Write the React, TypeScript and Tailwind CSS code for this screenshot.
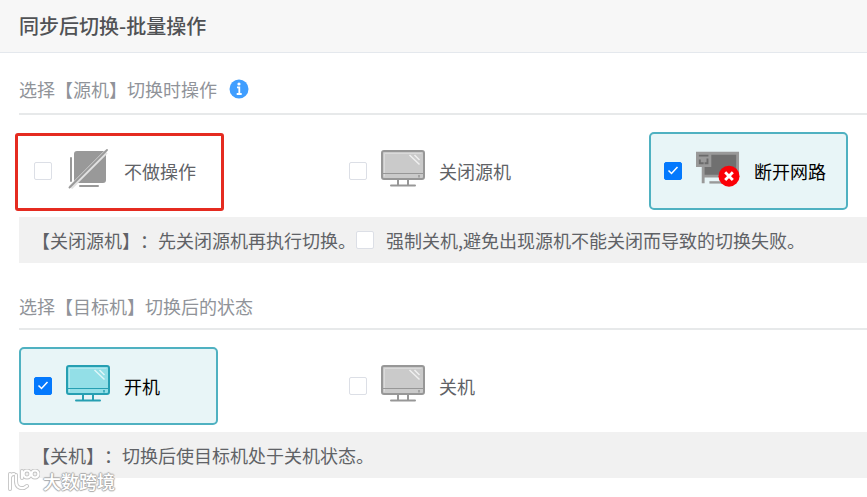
import React, { useState } from 'react';

type IconName = 'none' | 'monitor' | 'network';

interface Option {
  id: string;
  label: string;
  icon: IconName;
}

const sourceOptions: Option[] = [
  { id: 'source-none', label: '不做操作', icon: 'none' },
  { id: 'source-shutdown', label: '关闭源机', icon: 'monitor' },
  { id: 'source-disconnect', label: '断开网路', icon: 'network' },
];

const targetOptions: Option[] = [
  { id: 'target-on', label: '开机', icon: 'monitor' },
  { id: 'target-off', label: '关机', icon: 'monitor' },
];

function NoneIcon() {
  return (
    <svg width="44" height="40" viewBox="0 0 44 40" fill="none" aria-hidden="true">
      <rect x="8" y="2" width="32" height="32" rx="3" fill="#999" />
      <path d="M5 9v23M14 37h18" stroke="#999" strokeWidth="2" strokeLinecap="round" />
      <path d="M4.5 38.500L40 3" stroke="#e2e2e2" strokeWidth="4.5" />
      <path d="M3.5 38.500L41 1" stroke="#999" strokeWidth="1.8" strokeLinecap="round" />
    </svg>
  );
}

function MonitorIcon({ active }: { active: boolean }) {
  const line = active ? '#269fb2' : '#979797';
  const fill = active ? '#93dfe7' : '#cacaca';
  return (
    <svg width="44" height="40" viewBox="0 0 44 40" fill="none" aria-hidden="true">
      <rect x="1" y="2" width="42" height="28" rx="2" fill={fill} stroke={line} strokeWidth="2" />
      <path d="M3.5 27.5v-23h37" stroke="#fff" strokeOpacity="0.3" />
      <path d="M2 24.5h40" stroke={line} strokeWidth="1.2" />
      <path d="M38 26v2.5" stroke={line} strokeWidth="1.5" />
      <path d="M28.5 6l10 9.5M33.5 6l5 5" stroke="#fff" strokeOpacity="0.7" strokeWidth="1.5" />
      <path d="M17 31v5M27 31v5" stroke={line} strokeWidth="2" />
      <path d="M10 36.5h24" stroke={line} strokeWidth="2" strokeLinecap="round" />
    </svg>
  );
}

function NetworkIcon() {
  return (
    <svg width="46" height="40" viewBox="0 0 46 40" fill="none" aria-hidden="true">
      <path d="M0 2h45v27H9v6H6V18H0z" fill="#999" />
      <path d="M16 5h26v21H9v-8h7z" fill="#707070" />
      <path d="M3 6h10M4 10v4h4M12 9v5h-3" stroke="#6b6b6b" strokeWidth="2" />
      <path d="M14 34h15" stroke="#999" strokeWidth="2.5" />
      <circle cx="34.5" cy="27.5" r="11" fill="#fb0007" />
      <path d="M30.5 23.5l8 8M38.5 23.5l-8 8" stroke="#fff" strokeWidth="3" />
    </svg>
  );
}

function OptionIcon({ name, active }: { name: IconName; active: boolean }) {
  if (name === 'none') return <NoneIcon />;
  if (name === 'network') return <NetworkIcon />;
  return <MonitorIcon active={active} />;
}

interface CheckProps {
  id: string;
  checked: boolean;
  onChange: () => void;
}

function Check({ id, checked, onChange }: CheckProps) {
  return (
    <span className="relative block h-[18px] w-[18px] shrink-0">
      <input
        id={id}
        type="checkbox"
        checked={checked}
        onChange={onChange}
        className="block h-full w-full appearance-none rounded-xs border border-[#dcdfe6] bg-white checked:border-[#0479fd] checked:bg-[#0479fd]"
      />
      {checked && (
        <svg className="pointer-events-none absolute inset-0" width="18" height="18" viewBox="0 0 18 18" fill="none" aria-hidden="true">
          <path d="M4.5 8.5l3 3 6-6.5" stroke="#fff" strokeWidth="1.5" />
        </svg>
      )}
    </span>
  );
}

interface OptionRowProps {
  options: Option[];
  selected: string;
  marked?: string;
  onSelect: (id: string) => void;
}

function OptionRow({ options, selected, marked, onSelect }: OptionRowProps) {
  return (
    <div className="grid grid-cols-[repeat(3,199px)] justify-between pt-[17px] pr-[19px] pb-[7px]">
      {options.map((option) => {
        const active = option.id === selected;
        return (
          <div
            key={option.id}
            className={
              active
                ? 'relative flex h-[78px] items-center rounded-[5px] border-2 border-[#4fb1c1] bg-[#e8f5f7] px-[13px] text-black'
                : 'relative flex h-[78px] items-center rounded-[5px] border-2 border-transparent px-[13px] text-[#606266]'
            }
          >
            <Check id={option.id} checked={active} onChange={() => onSelect(option.id)} />
            <label htmlFor={option.id} className="flex items-center whitespace-nowrap">
              <span className="mx-[14px] flex w-[44px] -translate-y-0.5">
                <OptionIcon name={option.icon} active={active} />
              </span>
              {option.label}
            </label>
            {/* highlight frame around the marked option */}
            {option.id === marked && (
              <span className="pointer-events-none absolute -top-px -right-2 -bottom-[3px] -left-[6px] rounded-[3px] border-3 border-[#e52b20]" />
            )}
          </div>
        );
      })}
    </div>
  );
}

function Watermark() {
  const shape = (
    <>
      <path d="M2 5v15M2 8q1-3 4-3M8 6v6q0 8 8 7l3-2" />
      <path d="M14 2v7" />
      <circle cx="19" cy="5" r="3.5" />
      <circle cx="27" cy="5" r="3.5" />
    </>
  );
  return (
    <div className="absolute top-[469px] left-2 flex items-center gap-[3px] text-[18px] leading-[24px] text-white">
      <svg width="32" height="24" viewBox="0 0 32 24" fill="none" strokeLinecap="round" aria-hidden="true">
        <g stroke="#c4c4c4" strokeWidth="4">{shape}</g>
        <g stroke="#fff" strokeWidth="2.2">{shape}</g>
      </svg>
      <span className="font-medium [text-shadow:1px_0_1px_#aaa,-1px_0_1px_#aaa,0_1px_1px_#aaa,0_-1px_1px_#aaa]">
        大数跨境
      </span>
    </div>
  );
}

export default function App() {
  const [source, setSource] = useState('source-disconnect');
  const [target, setTarget] = useState('target-on');
  const [force, setForce] = useState(false);

  return (
    <div className="relative min-h-screen overflow-hidden bg-white font-['Noto_Sans_CJK_SC',sans-serif] text-[18px] leading-[24px] text-[#606266] [text-spacing-trim:space-all]">
      <header className="flex h-[53px] items-center border-b border-[#e4e8ed] bg-[#f7f7f7] pl-[19px]">
        <h1 className="text-[20px] font-medium text-[#505255]">同步后切换-批量操作</h1>
      </header>

      <main className="pl-[19px]">
        <section>
          <h2 className="flex h-[62px] items-center gap-3 border-b-2 border-[#e7e9ea] pt-[12px] text-[#909399]">
            选择【源机】切换时操作
            <svg width="20" height="20" viewBox="0 0 20 20" aria-hidden="true">
              <circle cx="10" cy="10" r="9.5" fill="#409eff" />
              <circle cx="10" cy="5" r="1.6" fill="#fff" />
              <path d="M8 8.3h2.3v6.5M7.700 15h5" fill="none" stroke="#fff" strokeWidth="1.8" />
            </svg>
          </h2>
          <OptionRow options={sourceOptions} selected={source} marked="source-none" onSelect={setSource} />
          <div className="flex min-h-[46px] items-center bg-[#f1f1f1] pl-[13px]">
            <p className="whitespace-nowrap">【关闭源机】：先关闭源机再执行切换。</p>
            <Check id="force" checked={force} onChange={() => setForce(!force)} />
            <label htmlFor="force" className="ml-3 whitespace-nowrap">
              强制关机,避免出现源机不能关闭而导致的切换失败。
            </label>
          </div>
        </section>

        <section>
          <h2 className="flex h-[67px] items-center border-b-2 border-[#e7e9ea] pt-[20px] text-[#909399]">
            选择【目标机】切换后的状态
          </h2>
          <OptionRow options={targetOptions} selected={target} onSelect={setTarget} />
          <p className="flex min-h-[46px] items-center bg-[#f1f1f1] pl-[13px]">
            【关机】：切换后使目标机处于关机状态。
          </p>
        </section>
      </main>

      <Watermark />
    </div>
  );
}
